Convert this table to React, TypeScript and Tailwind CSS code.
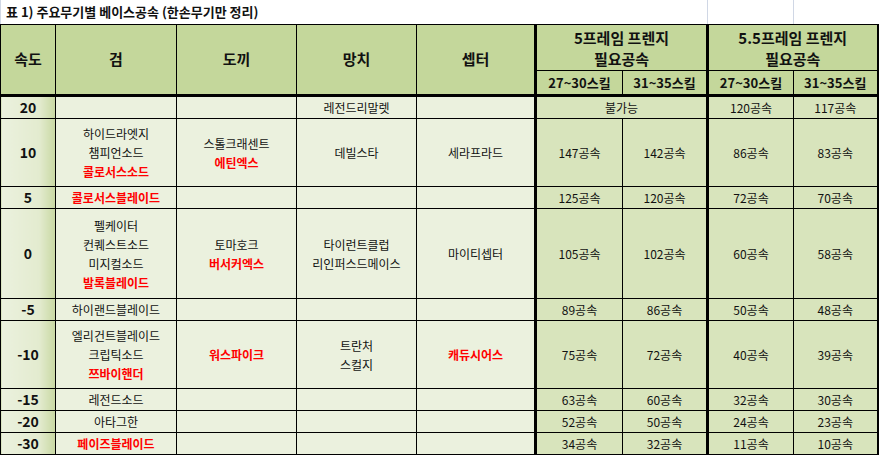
import React from 'react';

type Line = { t: string; red?: boolean };
type Cell = string | Line[];

interface Row {
  speed: string;
  h: string;
  sword: Cell;
  axe: Cell;
  hammer: Cell;
  scepter: Cell;
  nums: string[];
}

const ROWS: Row[] = [
  { speed: '20', h: 'h-[21px]', sword: '', axe: '', hammer: '레전드리말렛', scepter: '', nums: ['불가능', '120공속', '117공속'] },
  {
    speed: '10',
    h: 'h-[68px]',
    sword: [{ t: '하이드라엣지' }, { t: '챔피언소드' }, { t: '콜로서스소드', red: true }],
    axe: [{ t: '스톨크래센트' }, { t: '에틴엑스', red: true }],
    hammer: '데빌스타',
    scepter: '세라프라드',
    nums: ['147공속', '142공속', '86공속', '83공속'],
  },
  { speed: '5', h: 'h-[22px]', sword: [{ t: '콜로서스블레이드', red: true }], axe: '', hammer: '', scepter: '', nums: ['125공속', '120공속', '72공속', '70공속'] },
  {
    speed: '0',
    h: 'h-[90px]',
    sword: [{ t: '펠케이터' }, { t: '컨퀘스트소드' }, { t: '미지컬소드' }, { t: '발록블레이드', red: true }],
    axe: [{ t: '토마호크' }, { t: '버서커엑스', red: true }],
    hammer: [{ t: '타이런트클럽' }, { t: '리인퍼스드메이스' }],
    scepter: '마이티셉터',
    nums: ['105공속', '102공속', '60공속', '58공속'],
  },
  { speed: '-5', h: 'h-[22px]', sword: '하이랜드블레이드', axe: '', hammer: '', scepter: '', nums: ['89공속', '86공속', '50공속', '48공속'] },
  {
    speed: '-10',
    h: 'h-[68px]',
    sword: [{ t: '엘리건트블레이드' }, { t: '크립틱소드' }, { t: '쯔바이핸더', red: true }],
    axe: [{ t: '워스파이크', red: true }],
    hammer: [{ t: '트란처' }, { t: '스컬지' }],
    scepter: [{ t: '캐듀시어스', red: true }],
    nums: ['75공속', '72공속', '40공속', '39공속'],
  },
  { speed: '-15', h: 'h-[22px]', sword: '레전드소드', axe: '', hammer: '', scepter: '', nums: ['63공속', '60공속', '32공속', '30공속'] },
  { speed: '-20', h: 'h-[22px]', sword: '아타그한', axe: '', hammer: '', scepter: '', nums: ['52공속', '50공속', '24공속', '23공속'] },
  { speed: '-30', h: 'h-[22px]', sword: [{ t: '페이즈블레이드', red: true }], axe: '', hammer: '', scepter: '', nums: ['34공속', '32공속', '11공속', '10공속'] },
];

const FONT = { fontFamily: '"Noto Sans CJK KR", "Noto Sans", sans-serif' };

function Text({ cell }: { cell: Cell }) {
  if (typeof cell === 'string') return <>{cell}</>;
  return (
    <div className="flex flex-col items-center">
      {cell.map((l) => (
        <span key={l.t} className={l.red ? 'text-[#ff0000] font-bold' : ''}>
          {l.t}
        </span>
      ))}
    </div>
  );
}

const td = 'border border-black p-0 text-center align-middle';
const itemTd = `${td} bg-[#ebf1de] text-[12px] leading-[19px] text-[#111]`;
const numTd = `${td} bg-[#d8e4bc] text-[12px] leading-[19px] text-[#111]`;
const headTd = `${td} bg-[#c4d79b] text-[15px] font-bold text-[#111]`;
const subTd = `${td} bg-[#c4d79b] text-[13px] font-bold text-[#111] border-b-[3px] border-b-double`;

export default function App() {
  return (
    <div className="w-[880px] h-[455px] bg-white overflow-hidden" style={FONT}>
      {/* 제목 줄 */}
      <div className="flex h-[24px]">
        <div className="w-[707px] border-l border-[#d0d7e5] pl-[5px] flex items-center text-[13px] font-bold text-[#111]">
          표 1) 주요무기별 베이스공속 (한손무기만 정리)
        </div>
        <div className="w-[86px] border-l border-[#d0d7e5]" />
        <div className="w-[84px] border-l border-[#d0d7e5]" />
      </div>

      <table className="border-collapse table-fixed w-[877px]">
        <colgroup>
          <col className="w-[55px]" />
          <col className="w-[121px]" />
          <col className="w-[120px]" />
          <col className="w-[120px]" />
          <col className="w-[119px]" />
          <col className="w-[87px]" />
          <col className="w-[85px]" />
          <col className="w-[86px]" />
          <col className="w-[84px]" />
        </colgroup>
        <thead>
          <tr className="h-[46px]">
            {['속도', '검', '도끼', '망치', '셉터'].map((h) => (
              <th key={h} rowSpan={2} className={`${headTd} border-b-[3px] border-b-double`}>
                {h}
              </th>
            ))}
            <th colSpan={2} className={`${headTd} text-[13px] leading-[21px] border-l-[3px] border-l-double`}>
              5프레임 프렌지
              <br />
              필요공속
            </th>
            <th colSpan={2} className={`${headTd} text-[13px] leading-[21px] border-l-[3px] border-l-double border-r-2`}>
              5.5프레임 프렌지
              <br />
              필요공속
            </th>
          </tr>
          <tr className="h-[25px]">
            <th className={`${subTd} border-l-[3px] border-l-double`}>27~30스킬</th>
            <th className={subTd}>31~35스킬</th>
            <th className={`${subTd} border-l-[3px] border-l-double`}>27~30스킬</th>
            <th className={`${subTd} border-r-2`}>31~35스킬</th>
          </tr>
        </thead>
        <tbody>
          {ROWS.map((r, i) => {
            const last = i === ROWS.length - 1;
            const b = last ? 'border-b-2' : '';
            return (
              <tr key={r.speed} className={r.h}>
                <td
                  className={`${td} ${b} text-[14px] font-bold text-[#111] bg-[linear-gradient(to_right,#ebf1de_0%,#e3ebcf_70%,#c8d8a2_100%)]`}
                >
                  {r.speed}
                </td>
                <td className={`${itemTd} ${b}`}>
                  <Text cell={r.sword} />
                </td>
                <td className={`${itemTd} ${b}`}>
                  <Text cell={r.axe} />
                </td>
                <td className={`${itemTd} ${b}`}>
                  <Text cell={r.hammer} />
                </td>
                <td className={`${itemTd} ${b}`}>
                  <Text cell={r.scepter} />
                </td>
                {r.nums.length === 3 ? (
                  <>
                    <td colSpan={2} className={`${numTd} ${b} border-l-[3px] border-l-double`}>
                      {r.nums[0]}
                    </td>
                    <td className={`${numTd} ${b} border-l-[3px] border-l-double`}>{r.nums[1]}</td>
                    <td className={`${numTd} ${b} border-r-2`}>{r.nums[2]}</td>
                  </>
                ) : (
                  <>
                    <td className={`${numTd} ${b} border-l-[3px] border-l-double`}>{r.nums[0]}</td>
                    <td className={`${numTd} ${b}`}>{r.nums[1]}</td>
                    <td className={`${numTd} ${b} border-l-[3px] border-l-double`}>{r.nums[2]}</td>
                    <td className={`${numTd} ${b} border-r-2`}>{r.nums[3]}</td>
                  </>
                )}
              </tr>
            );
          })}
        </tbody>
      </table>
    </div>
  );
}
